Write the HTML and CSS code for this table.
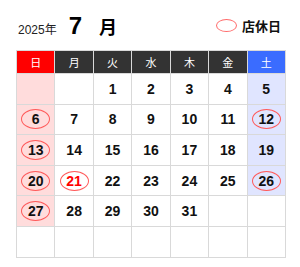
FILE: index.html
```html
<!DOCTYPE html>
<html lang="ja">
<head>
<meta charset="utf-8">
<link rel="stylesheet" href="styles.css">
</head>
<body>
<div class="wrap">
  <div class="top">
    <div class="title">
      <span class="year">2025年</span>
      <span class="mon">7</span>
      <span class="tsuki">月</span>
    </div>
    <div class="legend"><span class="ring"></span><span class="ltext">店休日</span></div>
  </div>
  <table class="cal">
    <thead>
      <tr>
        <th class="sun">日</th><th>月</th><th>火</th><th>水</th><th>木</th><th>金</th><th class="sat">土</th>
      </tr>
    </thead>
    <tbody>
      <tr><td class="sun"></td><td></td><td>1</td><td>2</td><td>3</td><td>4</td><td class="sat">5</td></tr>
      <tr><td class="sun"><span class="off">6</span></td><td>7</td><td>8</td><td>9</td><td>10</td><td>11</td><td class="sat"><span class="off">12</span></td></tr>
      <tr><td class="sun"><span class="off">13</span></td><td>14</td><td>15</td><td>16</td><td>17</td><td>18</td><td class="sat">19</td></tr>
      <tr><td class="sun"><span class="off">20</span></td><td><span class="off red">21</span></td><td>22</td><td>23</td><td>24</td><td>25</td><td class="sat"><span class="off">26</span></td></tr>
      <tr><td class="sun"><span class="off">27</span></td><td>28</td><td>29</td><td>30</td><td>31</td><td></td><td></td></tr>
      <tr><td></td><td></td><td></td><td></td><td></td><td></td><td></td></tr>
    </tbody>
  </table>
</div>
</body>
</html>
```

FILE: styles.css
```css
html, body {
  margin: 0;
  padding: 0;
  background: #fff;
}
body {
  font-family: "Liberation Sans", "Noto Sans CJK JP", sans-serif;
  color: #111;
}
.wrap {
  padding: 0 14px 0 16px;
}
.top {
  display: flex;
  justify-content: space-between;
  align-items: center;
  height: 50px;
}
.title {
  display: flex;
  align-items: baseline;
  padding-left: 2px;
  padding-top: 1px;
}
.year {
  font-size: 12px;
  color: #222;
}
.mon {
  font-size: 24px;
  font-weight: bold;
  margin-left: 12px;
  color: #000;
}
.tsuki {
  font-family: "Noto Sans CJK JP", sans-serif;
  font-size: 18px;
  font-weight: bold;
  margin-left: 17px;
  color: #000;
}
.legend {
  display: flex;
  align-items: center;
  margin-right: 5px;
  padding-top: 1px;
}
.ring {
  display: inline-block;
  width: 19px;
  height: 11px;
  border: 1px solid #ff6b6b;
  border-radius: 50%;
  margin-right: 5px;
}
.ltext {
  font-family: "Noto Sans CJK JP", sans-serif;
  font-size: 13px;
  font-weight: bold;
  color: #111;
}
.cal {
  border-collapse: collapse;
  width: 270px;
  table-layout: fixed;
}
.cal th, .cal td {
  border: 1px solid #d9d9d9;
  text-align: center;
  padding: 0;
}
.cal th {
  height: 22px;
  background: #333;
  color: #fff;
  font-family: "Noto Sans CJK JP", sans-serif;
  font-size: 11px;
  font-weight: normal;
}
.cal th.sun {
  background: #ff0000;
}
.cal th.sat {
  background: #3a6cff;
}
.cal td {
  height: 29.6px;
  font-size: 14px;
  font-weight: bold;
  color: #111;
}
.cal td.sun {
  background: #ffdcdc;
}
.cal td.sat {
  background: #e0e5ff;
}
.off {
  display: inline-flex;
  align-items: center;
  justify-content: center;
  width: 27px;
  height: 18px;
  border: 1px solid #ff5a5a;
  border-radius: 50%;
  vertical-align: middle;
}
.red {
  color: #ff0000;
}
```
